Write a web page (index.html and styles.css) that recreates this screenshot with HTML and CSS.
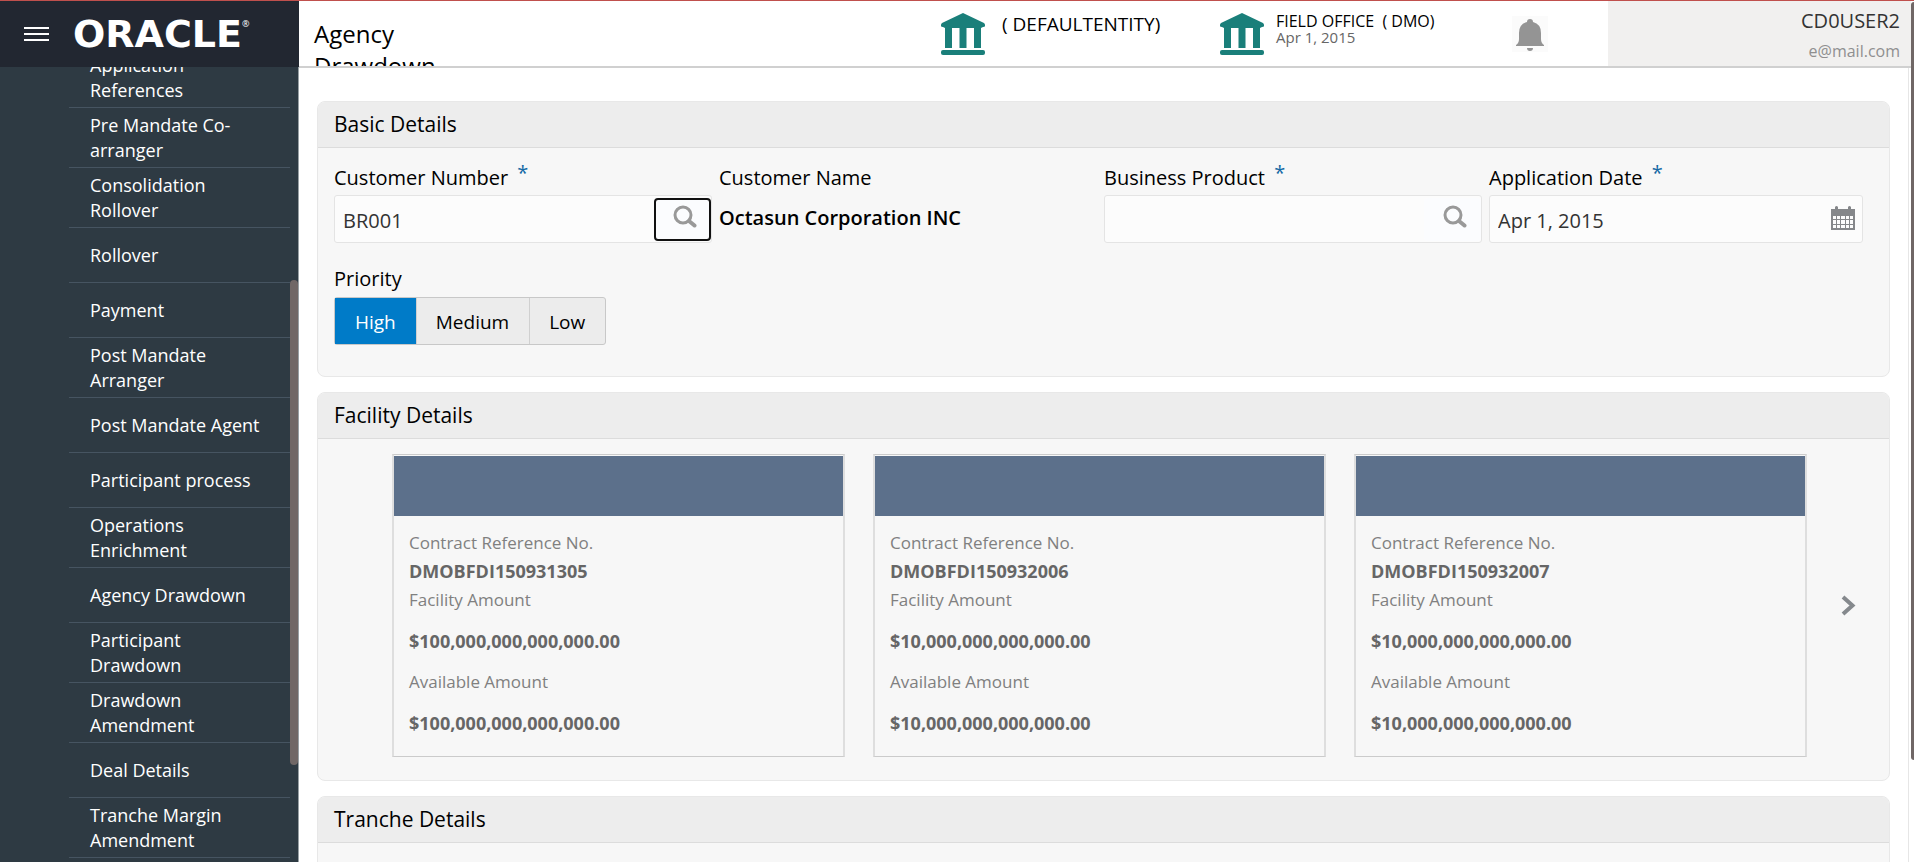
FILE: index.html
```html
<!DOCTYPE html>
<html lang="en">
<head>
<meta charset="utf-8">
<title>Agency Drawdown</title>
<link rel="stylesheet" href="styles.css">
</head>
<body>
<svg class="defs" aria-hidden="true">
  <symbol id="bank" viewBox="0 0 44 42">
    <path d="M22 0 L43 10 Q44 11 44 12 L44 13 Q44 14 42 14 L40 15 L40 35 L33 35 L33 15 L25.500 15 L25.500 35 L18.500 35 L18.500 15 L11 15 L11 35 L4 35 L4 15 L2 14 Q0 14 0 13 L0 12 Q0 11 1 10 Z"/>
    <rect x="0" y="37" width="44" height="5" rx="2"/>
  </symbol>
  <symbol id="search" viewBox="0 0 24 24">
    <circle cx="10" cy="10" r="8" fill="none" stroke="currentColor" stroke-width="3"/>
    <path d="M16 16 L21.500 20.500" stroke="currentColor" stroke-width="4" stroke-linecap="round"/>
  </symbol>
</svg>
<div class="app">
  <aside class="sidebar">
    <div class="brand">
      <button class="menu" type="button" aria-label="Menu"><span></span><span></span><span></span></button>
      <div class="logo">ORACLE<sup>®</sup></div>
    </div>
    <nav class="nav">
      <ul class="nav-list">
        <li><a href="#">Application References</a></li>
        <li><a href="#">Pre Mandate Co-arranger</a></li>
        <li><a href="#">Consolidation Rollover</a></li>
        <li><a href="#">Rollover</a></li>
        <li><a href="#">Payment</a></li>
        <li><a href="#">Post Mandate Arranger</a></li>
        <li><a href="#">Post Mandate Agent</a></li>
        <li><a href="#">Participant process</a></li>
        <li><a href="#">Operations Enrichment</a></li>
        <li><a href="#">Agency Drawdown</a></li>
        <li><a href="#">Participant Drawdown</a></li>
        <li><a href="#">Drawdown Amendment</a></li>
        <li><a href="#">Deal Details</a></li>
        <li><a href="#">Tranche Margin Amendment</a></li>
      </ul>
      <div class="nav-thumb"></div>
    </nav>
  </aside>
  <div class="page">
    <header class="topbar">
      <h1 class="title">Agency Drawdown</h1>
      <div class="entity">
        <svg class="bank"><use href="#bank"/></svg>
        <span class="entity-name">( DEFAULTENTITY)</span>
      </div>
      <div class="branch">
        <svg class="bank"><use href="#bank"/></svg>
        <div class="branch-text"><span>FIELD OFFICE&nbsp; ( DMO)</span><small>Apr 1, 2015</small></div>
      </div>
      <div class="alerts">
        <button class="bell" type="button" aria-label="Notifications">
          <svg viewBox="0 0 28 32"><path d="M14 0 Q17 0 17 3 Q25 5 25 14 L25 20 Q25 24 28 26 L28 27 L0 27 L0 26 Q3 24 3 20 L3 14 Q3 5 11 3 Q11 0 14 0Z M11 29 L17 29 Q17 32 14 32 Q11 32 11 29Z"/></svg>
        </button>
      </div>
      <div class="user"><span>CD0USER2</span><small>e@mail.com</small></div>
    </header>
    <main class="content">
      <section class="panel">
        <h2>Basic Details</h2>
        <div class="form">
          <div class="field">
            <label for="cust">Customer Number <span class="req">*</span></label>
            <div class="control"><input id="cust" type="text" value="BR001"><button class="lookup focused" type="button" aria-label="Search customer"><svg><use href="#search"/></svg></button></div>
          </div>
          <div class="field">
            <span class="label">Customer Name</span>
            <strong class="value">Octasun Corporation INC</strong>
          </div>
          <div class="field">
            <label for="prod">Business Product <span class="req">*</span></label>
            <div class="control"><input id="prod" type="text"><button class="lookup" type="button" aria-label="Search product"><svg><use href="#search"/></svg></button></div>
          </div>
          <div class="field date">
            <label for="date">Application Date <span class="req">*</span></label>
            <div class="control"><input id="date" type="text" value="Apr 1, 2015"><button class="calendar" type="button" aria-label="Pick date">
              <svg viewBox="0 0 24 24"><path d="M0 3 H4 V1 Q5.500 -1 7 1 V3 H17 V1 Q18.500 -1 20 1 V3 H24 V24 H0Z"/><path class="cells" d="M2 10h3v3h-3z M6 10h3v3h-3z M10 10h4v3h-4z M15 10h3v3h-3z M19 10h3v3h-3z M2 14h3v4h-3z M6 14h3v4h-3z M10 14h4v4h-4z M15 14h3v4h-3z M19 14h3v4h-3z M2 19h3v3h-3z M6 19h3v3h-3z M10 19h4v3h-4z M15 19h3v3h-3z M19 19h3v3h-3z"/></svg>
            </button></div>
          </div>
          <fieldset class="field priority">
            <legend>Priority</legend>
            <div class="segments">
              <label><input type="radio" name="priority" checked><span>High</span></label>
              <label><input type="radio" name="priority"><span>Medium</span></label>
              <label><input type="radio" name="priority"><span>Low</span></label>
            </div>
          </fieldset>
        </div>
      </section>
      <section class="panel">
        <h2>Facility Details</h2>
        <div class="carousel">
          <div class="cards">
            <article class="card">
              <div class="band"></div>
              <dl><dt>Contract Reference No.</dt><dd class="ref">DMOBFDI150931305</dd><dt>Facility Amount</dt><dd>$100,000,000,000,000.00</dd><dt>Available Amount</dt><dd>$100,000,000,000,000.00</dd></dl>
            </article>
            <article class="card">
              <div class="band"></div>
              <dl><dt>Contract Reference No.</dt><dd class="ref">DMOBFDI150932006</dd><dt>Facility Amount</dt><dd>$10,000,000,000,000.00</dd><dt>Available Amount</dt><dd>$10,000,000,000,000.00</dd></dl>
            </article>
            <article class="card">
              <div class="band"></div>
              <dl><dt>Contract Reference No.</dt><dd class="ref">DMOBFDI150932007</dd><dt>Facility Amount</dt><dd>$10,000,000,000,000.00</dd><dt>Available Amount</dt><dd>$10,000,000,000,000.00</dd></dl>
            </article>
          </div>
          <button class="next" type="button" aria-label="Next"><svg viewBox="0 0 15 21"><path d="M2 2 L11.500 10.500 L2 19"/></svg></button>
        </div>
      </section>
      <section class="panel">
        <h2>Tranche Details</h2>
        <div class="form"></div>
      </section>
    </main>
  </div>
  <div class="page-thumb"></div>
</div>
</body>
</html>
```

FILE: styles.css
```css
* { box-sizing: border-box; }
body {
  margin: 0;
  font-family: "Segoe UI", "Open Sans", "Noto Sans", sans-serif;
  font-size: 18px;
  color: #000;
  background: #fff;
}
button { border: 0; padding: 0; background: none; font: inherit; }
svg { display: block; }
.defs { display: none; }

.app {
  position: relative;
  display: flex;
  height: 100vh;
  overflow: hidden;
  border-top: 1px solid #c0504d;
}

/* Sidebar */
.sidebar {
  display: flex;
  flex-direction: column;
  flex: none;
  width: 299px;
  background: #2e3a43;
}
.brand {
  display: flex;
  align-items: center;
  gap: 24px;
  flex: none;
  height: 66px;
  padding-left: 24px;
  background: #222731;
}
.menu { display: flex; flex-direction: column; gap: 4px; width: 25px; }
.menu span { height: 2px; background: #fff; }
.logo {
  display: flex;
  align-items: flex-start;
  color: #fff;
  font: bold 38px/40px "DejaVu Sans", sans-serif;
}
.logo sup { font: 9px/20px "Open Sans", sans-serif; }
.nav {
  position: relative;
  display: flex;
  flex-direction: column;
  justify-content: flex-end;
  flex: 1;
  min-height: 0;
  overflow: hidden;
  padding: 0 8px 4px 69px;
  border-right: 1px solid #98a0a4;
}
.nav-list { flex: none; margin: 0; padding: 0; list-style: none; }
.nav-list a {
  display: flex;
  align-items: center;
  min-height: 55px;
  padding: 5px 24px 4px 21px;
  border-bottom: 1px solid #465461;
  color: #fff;
  line-height: 25px;
  text-decoration: none;
}
.nav-thumb {
  position: absolute;
  top: 25%;
  right: 0;
  width: 8px;
  height: 61%;
  margin-top: 14px;
  border-radius: 4px;
  background: #706766;
}

/* Top bar */
.page { display: flex; flex-direction: column; flex: 1; min-width: 0; padding-right: 3px; }
.topbar {
  display: flex;
  flex: none;
  height: 67px;
  border-bottom: 2px solid #d0d0d0;
}
.title {
  flex: 1;
  height: 65px;
  margin: 0;
  padding: 17px 500px 0 15px;
  overflow: hidden;
  font-size: 24px;
  font-weight: 400;
  line-height: 32px;
}
.bank { flex: none; width: 44px; height: 42px; fill: #1a7f7a; }
.entity { display: flex; gap: 17px; flex: none; width: 279px; padding-top: 12px; }
.entity-name { font-size: 19px; line-height: 22px; }
.branch { display: flex; gap: 12px; flex: none; width: 292px; padding-top: 12px; }
.branch-text { display: flex; flex-direction: column; font-size: 16px; line-height: 16px; }
.branch-text small { color: #666; font-size: 15px; }
.alerts { flex: none; width: 96px; padding-top: 15px; }
.bell { padding: 3px 4px 1px; background: #fbfbfb; }
.bell svg { width: 28px; height: 32px; fill: #949494; }
.user {
  display: flex;
  flex-direction: column;
  align-items: flex-end;
  flex: none;
  width: 303px;
  padding: 5px 11px 0 0;
  background: #f1f0ef;
  color: #333;
  font-size: 20px;
  line-height: 30px;
}
.user small { color: #8f8f8f; font-size: 16px; }

/* Content */
.content {
  flex: 1;
  min-height: 0;
  overflow: hidden;
  margin-right: 2px;
  padding: 33px 18px 0;
  border-right: 1px solid #e6e6e6;
}
.panel {
  margin-bottom: 15px;
  border: 1px solid #e8e8e8;
  border-radius: 8px;
  background: #f7f7f7;
  overflow: hidden;
}
.panel h2 {
  margin: 0;
  padding: 0 16px;
  border-bottom: 1px solid #dcdcdc;
  background: #ededed;
  font-size: 21px;
  font-weight: 400;
  line-height: 45px;
}
.form {
  display: grid;
  grid-template-columns: repeat(4, minmax(0, 1fr));
  gap: 22px 7px;
  min-height: 60px;
  padding: 16px 22px 31px 16px;
}
.field { min-width: 0; margin: 0; padding: 0; border: 0; }
.field > label, .label, legend { display: block; padding: 0; font-size: 20px; line-height: 28px; }
.field > label, .label { margin-bottom: 3px; }
legend { margin-bottom: 4px; }
.req { margin-left: 4px; color: #1569a5; vertical-align: 5px; line-height: 10px; }
.control {
  display: flex;
  align-items: center;
  height: 48px;
  border: 1px solid #e4e4e4;
  border-radius: 3px;
  background: #fcfcfc;
}
.date .control { margin-right: 4px; }
.control input {
  flex: 1;
  min-width: 0;
  height: 46px;
  padding: 3px 8px 0;
  border: 0;
  outline: 0;
  background: transparent;
  color: #333;
  font: 20px "Segoe UI", "Open Sans", sans-serif;
}
.lookup { width: 57px; height: 43px; padding: 0 0 5px 17px; border: 2px solid transparent; border-radius: 4px; background: #fbfcfe; color: #999; }
.lookup.focused { border-color: #111; }
.lookup svg { width: 24px; height: 24px; }
.calendar { width: 24px; height: 24px; margin: 0 7px 2px 0; }
.calendar svg { width: 24px; height: 24px; fill: #85878a; }
.calendar .cells { fill: #fcfcfc; }
.value { display: block; font-size: 20px; font-weight: 600; line-height: 46px; }
.segments { display: inline-flex; border: 1px solid #c8c8c8; border-radius: 3px; background: #ececec; }
.segments input { position: absolute; opacity: 0; }
.segments span {
  display: block;
  height: 46px;
  padding: 2px 20px 0 19px;
  border-left: 1px solid #d0d0d0;
  font-size: 19px;
  line-height: 44px;
}
.segments label:first-child span { border-left-color: transparent; }
.segments input:checked + span { background: #007bc8; color: #fff; }

/* Facility carousel */
.carousel { display: flex; align-items: center; padding: 15px 33px 23px 74px; }
.cards { display: grid; grid-template-columns: repeat(3, minmax(0, 1fr)); gap: 28px; flex: 1; }
.card { border: 1px solid #cbcbcb; border-width: 1px 2px; border-color: #cbcbcb #dedede; padding-top: 1px; }
.band { height: 60px; background: #5c708b; }
.card dl { margin: 0; padding: 13px 15px 6px; font-size: 17px; }
.card dt { color: #808080; line-height: 28px; }
.card dd { margin: 0; color: #666; font-size: 18px; font-weight: 700; line-height: 54px; }
.card dd.ref { line-height: 29px; }
.next { width: 15px; margin-left: 34px; }
.next svg { width: 15px; height: 21px; fill: none; stroke: #85898d; stroke-width: 4; }

.page-thumb {
  position: absolute;
  top: 1px;
  right: 0;
  width: 3px;
  height: 88%;
  border-radius: 3px 0 0 3px;
  background: #706766;
}
```
